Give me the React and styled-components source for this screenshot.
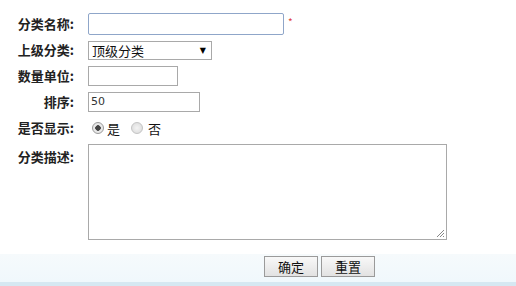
import React from "react";
import styled, { createGlobalStyle } from "styled-components";

const Global = createGlobalStyle`
  html, body { margin: 0; padding: 0; background: #fff; }
  body { font-family: "Noto Sans CJK SC", "Liberation Sans", sans-serif; font-size: 13px; color: #222; }
`;

const Page = styled.div`
  width: 516px;
  height: 286px;
  display: flex;
  flex-direction: column;
  overflow: hidden;
`;

const Form = styled.div`
  padding-top: 11px;
  display: flex;
  flex-direction: column;
`;

const Row = styled.div`
  display: grid;
  grid-template-columns: 74px 1fr;
  column-gap: 14px;
  height: ${(p) => p.$h || 26}px;
  align-items: ${(p) => (p.$top ? "start" : "center")};
  padding-top: ${(p) => p.$pt || 0}px;
`;

const Label = styled.div`
  text-align: right;
  font-weight: bold;
  font-size: 13px;
  line-height: 16px;
  color: #222;
  white-space: nowrap;
  padding-top: ${(p) => p.$pt || 0}px;
`;

const Field = styled.div`
  display: flex;
  align-items: center;
  gap: 4px;
`;

const TextBox = styled.div`
  box-sizing: border-box;
  width: ${(p) => p.$w}px;
  height: ${(p) => p.$h || 20}px;
  border: 1px solid ${(p) => (p.$focus ? "#8fa6c9" : "#a9a9a9")};
  border-radius: ${(p) => (p.$focus ? 2 : 0)}px;
  font-family: "DejaVu Sans", "Liberation Sans", sans-serif;
  font-size: 11px;
  line-height: 18px;
  padding-left: 2px;
  color: #333;
  background: #fff;
`;

const Star = styled.span`
  color: #e04040;
  font-size: 10px;
  line-height: 10px;
  margin-top: -4px;
`;

const Select = styled.div`
  box-sizing: border-box;
  width: 124px;
  height: 19px;
  border: 1px solid #a9a9a9;
  display: flex;
  align-items: center;
  justify-content: space-between;
  padding: 0 5px 0 3px;
  font-size: 13px;
  color: #111;
`;

const Arrow = styled.span`
  font-family: "DejaVu Sans", sans-serif;
  font-size: 8px;
  color: #000;
`;

const Radio = styled.span`
  box-sizing: border-box;
  width: 12px;
  height: 12px;
  border-radius: 50%;
  border: 1px solid ${(p) => (p.$on ? "#9a9a9a" : "#c4c4c4")};
  background: ${(p) =>
    p.$on
      ? "radial-gradient(circle, #444 0 2.5px, #e8e8e8 3px)"
      : "radial-gradient(circle, #f4f4f4, #d8d8d8)"};
`;

const RadioText = styled.span`
  font-size: 13px;
  color: #111;
  margin: 0 8px 0 ${(p) => p.$ml || 0}px;
`;

const RadioGroup = styled.div`
  display: flex;
  align-items: center;
  gap: 3px;
  padding-left: 4px;
`;

const Area = styled.div`
  position: relative;
  box-sizing: border-box;
  width: 359px;
  height: 96px;
  border: 1px solid #a9a9a9;
  background: #fff;
`;

const Grip = styled.svg`
  position: absolute;
  right: 1px;
  bottom: 1px;
`;

const Spacer = styled.div`
  flex: 1;
`;

const Footer = styled.div`
  height: 26px;
  background: linear-gradient(#f6fafc, #f0f8fc);
  border-bottom: 4px solid #d6e8f2;
  display: flex;
  justify-content: center;
  align-items: flex-start;
  gap: 3px;
  padding-top: 2px;
  padding-left: 123px;
`;

const Button = styled.div`
  box-sizing: border-box;
  width: 54px;
  height: 21px;
  border: 1px solid #9a9a9a;
  background: linear-gradient(#f8f8f8, #e2e2e2);
  display: flex;
  align-items: center;
  justify-content: center;
  font-size: 13px;
  color: #111;
`;

export default function App() {
  return (
    <Page>
      <Global />
      <Form>
        <Row>
          <Label>分类名称:</Label>
          <Field>
            <TextBox $w={196} $h={22} $focus />
            <Star>*</Star>
          </Field>
        </Row>
        <Row>
          <Label>上级分类:</Label>
          <Field>
            <Select>
              <span>顶级分类</span>
              <Arrow>▼</Arrow>
            </Select>
          </Field>
        </Row>
        <Row>
          <Label>数量单位:</Label>
          <Field>
            <TextBox $w={90} />
          </Field>
        </Row>
        <Row>
          <Label>排序:</Label>
          <Field>
            <TextBox $w={112}>50</TextBox>
          </Field>
        </Row>
        <Row>
          <Label>是否显示:</Label>
          <RadioGroup>
            <Radio $on />
            <RadioText>是</RadioText>
            <Radio />
            <RadioText $ml={2}>否</RadioText>
          </RadioGroup>
        </Row>
        <Row $h={99} $top $pt={3}>
          <Label $pt={5}>分类描述:</Label>
          <Field>
            <Area>
              <Grip width="10" height="10" viewBox="0 0 10 10">
                <path d="M9 2 L2 9 M9 5 L5 9 M9 8 L8 9" stroke="#888" strokeWidth="1" />
              </Grip>
            </Area>
          </Field>
        </Row>
      </Form>
      <Spacer />
      <Footer>
        <Button>确定</Button>
        <Button>重置</Button>
      </Footer>
    </Page>
  );
}
